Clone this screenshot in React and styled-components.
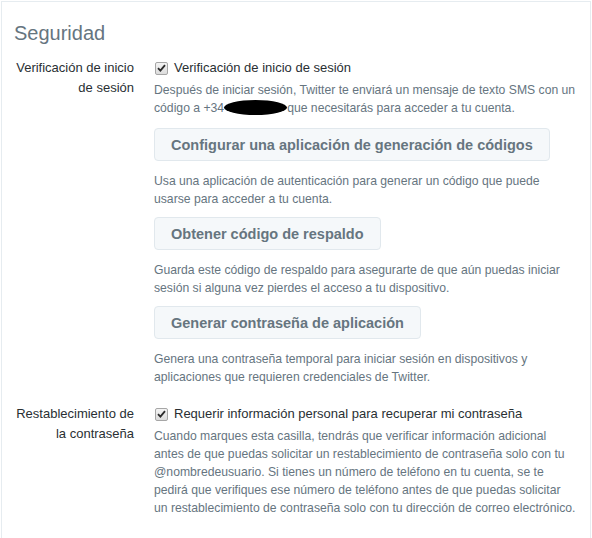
import React from 'react'
import styled, { createGlobalStyle } from 'styled-components'

const GlobalStyle = createGlobalStyle`
  html, body {
    margin: 0;
    padding: 0;
    background: #fff;
  }
  body {
    font-family: "Liberation Sans", Arial, sans-serif;
  }
`

const Page = styled.div`
  padding: 1px 0 0 1px;
  width: 592px;
  height: 538px;
  box-sizing: border-box;
  overflow: hidden;
`

const Panel = styled.div`
  width: 590px;
  min-height: 560px;
  box-sizing: border-box;
  border: 1px solid #e6ecf0;
  background: #fff;
  padding: 19px 13px 0 10px;
`

const Title = styled.h2`
  margin: 0 0 13px 2px;
  font-size: 20px;
  line-height: 24px;
  font-weight: normal;
  color: #66757f;
`

const Row = styled.div`
  display: grid;
  grid-template-columns: 122px 1fr;
  column-gap: 20px;
  margin-bottom: ${p => p.$gap || 0}px;
`

const Label = styled.div`
  text-align: right;
  font-size: 13px;
  line-height: 20px;
  color: #292f33;
`

const Controls = styled.div`
  display: flex;
  flex-direction: column;
  align-items: flex-start;
`

const CheckLine = styled.label`
  display: flex;
  align-items: center;
  gap: 6px;
  font-size: 13px;
  line-height: 20px;
  color: #292f33;
  margin-bottom: 3px;
`

const Box = styled.span`
  width: 13px;
  height: 13px;
  box-sizing: border-box;
  border: 1px solid #a6a6a6;
  border-radius: 2px;
  background: linear-gradient(#f4f4f4, #dcdcdc);
  display: inline-flex;
  align-items: center;
  justify-content: center;
  margin-left: 1px;
`

const Desc = styled.p`
  margin: 0;
  font-size: 12.2px;
  line-height: 18px;
  color: #66757f;
`

const Redacted = styled.span`
  display: inline-block;
  width: 63px;
  height: 15px;
  border-radius: 50%;
  background: #000;
  vertical-align: -3px;
`

const Button = styled.button`
  margin: ${p => (p.$first ? 11 : 9)}px 0 11px 0;
  padding: 0 16px;
  height: 33px;
  font-family: "Liberation Sans", Arial, sans-serif;
  font-size: 14.5px;
  font-weight: bold;
  color: #66757f;
  background: #f5f8fa;
  border: 1px solid #e1e8ed;
  border-radius: 4px;
  cursor: pointer;
`

const Check = () => (
  <Box>
    <svg width="9" height="8" viewBox="0 0 9 8">
      <path d="M1 4.2 L3.4 6.6 L8 1.2" fill="none" stroke="#2b2b2b" strokeWidth="1.8" />
    </svg>
  </Box>
)

export default function App() {
  return (
    <Page>
      <GlobalStyle />
      <Panel>
        <Title>Seguridad</Title>

        <Row $gap={18}>
          <Label>Verificación de inicio de sesión</Label>
          <Controls>
            <CheckLine>
              <Check />
              Verificación de inicio de sesión
            </CheckLine>
            <Desc>
              Después de iniciar sesión, Twitter te enviará un mensaje de texto SMS con un
              código a +34<Redacted />que necesitarás para acceder a tu cuenta.
            </Desc>
            <Button $first>Configurar una aplicación de generación de códigos</Button>
            <Desc>
              Usa una aplicación de autenticación para generar un código que puede
              usarse para acceder a tu cuenta.
            </Desc>
            <Button>Obtener código de respaldo</Button>
            <Desc>
              Guarda este código de respaldo para asegurarte de que aún puedas iniciar
              sesión si alguna vez pierdes el acceso a tu dispositivo.
            </Desc>
            <Button>Generar contraseña de aplicación</Button>
            <Desc>
              Genera una contraseña temporal para iniciar sesión en dispositivos y
              aplicaciones que requieren credenciales de Twitter.
            </Desc>
          </Controls>
        </Row>

        <Row>
          <Label>Restablecimiento de la contraseña</Label>
          <Controls>
            <CheckLine>
              <Check />
              Requerir información personal para recuperar mi contraseña
            </CheckLine>
            <Desc>
              Cuando marques esta casilla, tendrás que verificar información adicional
              antes de que puedas solicitar un restablecimiento de contraseña solo con tu
              @nombredeusuario. Si tienes un número de teléfono en tu cuenta, se te
              pedirá que verifiques ese número de teléfono antes de que puedas solicitar
              un restablecimiento de contraseña solo con tu dirección de correo electrónico.
            </Desc>
          </Controls>
        </Row>
      </Panel>
    </Page>
  )
}
